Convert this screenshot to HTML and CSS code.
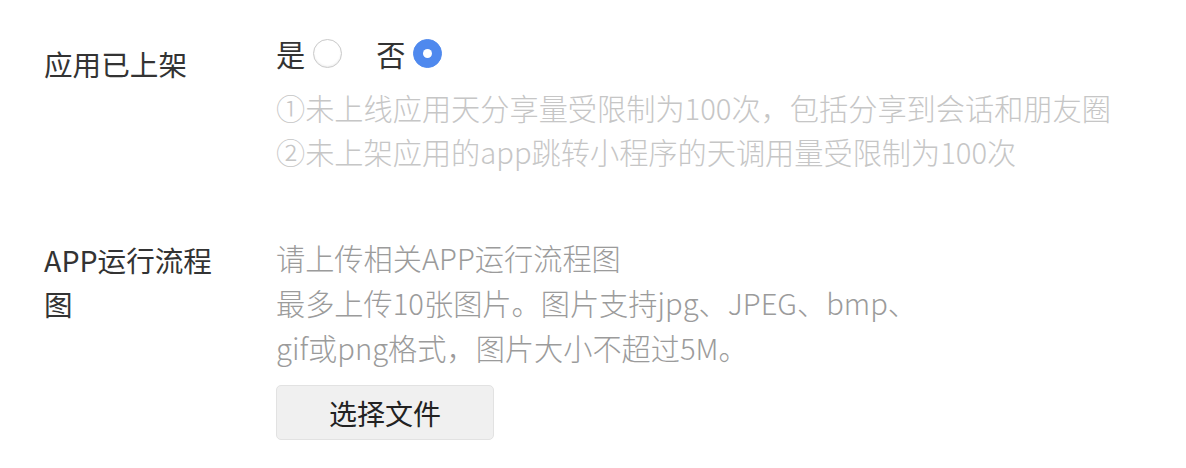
FILE: index.html
```html
<!DOCTYPE html>
<html lang="zh-CN">
<head>
<meta charset="utf-8">
<title>表单</title>
<link rel="stylesheet" href="styles.css">
</head>
<body>
<div class="form">
  <div class="row row-shelf">
    <div class="label">应用已上架</div>
    <div class="content">
      <div class="radios">
        <label class="radio"><span>是</span><input type="radio" name="shelf"></label>
        <label class="radio"><span>否</span><input type="radio" name="shelf" checked></label>
      </div>
      <div class="hints">
        <div class="hint light">①未上线应用天分享量受限制为100次，包括分享到会话和朋友圈</div>
        <div class="hint light">②未上架应用的app跳转小程序的天调用量受限制为100次</div>
      </div>
    </div>
  </div>
  <div class="row row-upload">
    <div class="label">APP运行流程图</div>
    <div class="content">
      <div class="hint dark">请上传相关APP运行流程图</div>
      <div class="hint dark">最多上传10张图片。图片支持jpg、JPEG、bmp、<br>gif或png格式，图片大小不超过5M。</div>
      <button class="file-btn" type="button">选择文件</button>
    </div>
  </div>
</div>
</body>
</html>
```

FILE: styles.css
```css
* { box-sizing: border-box; }
html, body { margin: 0; padding: 0; background: #fff; }
body {
  font-family: "Noto Sans CJK SC", "Noto Sans", sans-serif;
  font-size: 29.2px;
  color: #333;
  line-height: 44px;
}
.form {
  padding: 31px 0 0 44px;
}
.row {
  display: flex;
  gap: 42px;
}
.label {
  width: 190px;
  flex: none;
  color: #333;
  font-size: 28.6px;
}
.row-shelf .label { padding-top: 11px; }
.row-upload { margin-top: 62px; }
.row-upload .label { padding-top: 3px; }
.content { display: flex; flex-direction: column; align-items: flex-start; }
.radios { display: flex; align-items: center; height: 44px; gap: 34px; }
.radio { display: flex; align-items: center; gap: 8px; color: #333; }
.radio input {
  appearance: none;
  -webkit-appearance: none;
  margin: 0;
  width: 29px;
  height: 29px;
  border-radius: 50%;
  border: 1px solid #c9c9c9;
  background: #fff;
  box-shadow: inset 0 -1px 2px rgba(0,0,0,0.08);
  position: relative;
}
.radio input:checked {
  border-color: #4f89ee;
  background: #4f89ee;
  box-shadow: none;
}
.radio input:checked::after {
  content: "";
  position: absolute;
  left: 50%;
  top: 50%;
  width: 9px;
  height: 9px;
  margin: -4.5px 0 0 -4.5px;
  border-radius: 50%;
  background: #fff;
}
.hints { margin-top: 10px; }
.hint { font-weight: 300; }
.hint.light { color: #c6c6c6; }
.hint.dark { color: #9b9b9b; line-height: 45px; }
.file-btn {
  margin-top: 15px;
  width: 218px;
  height: 55px;
  font-family: inherit;
  font-size: 28px;
  color: #222;
  background: #f0f0f0;
  border: 1px solid #e2e2e2;
  border-radius: 5px;
  padding: 0;
}
```
